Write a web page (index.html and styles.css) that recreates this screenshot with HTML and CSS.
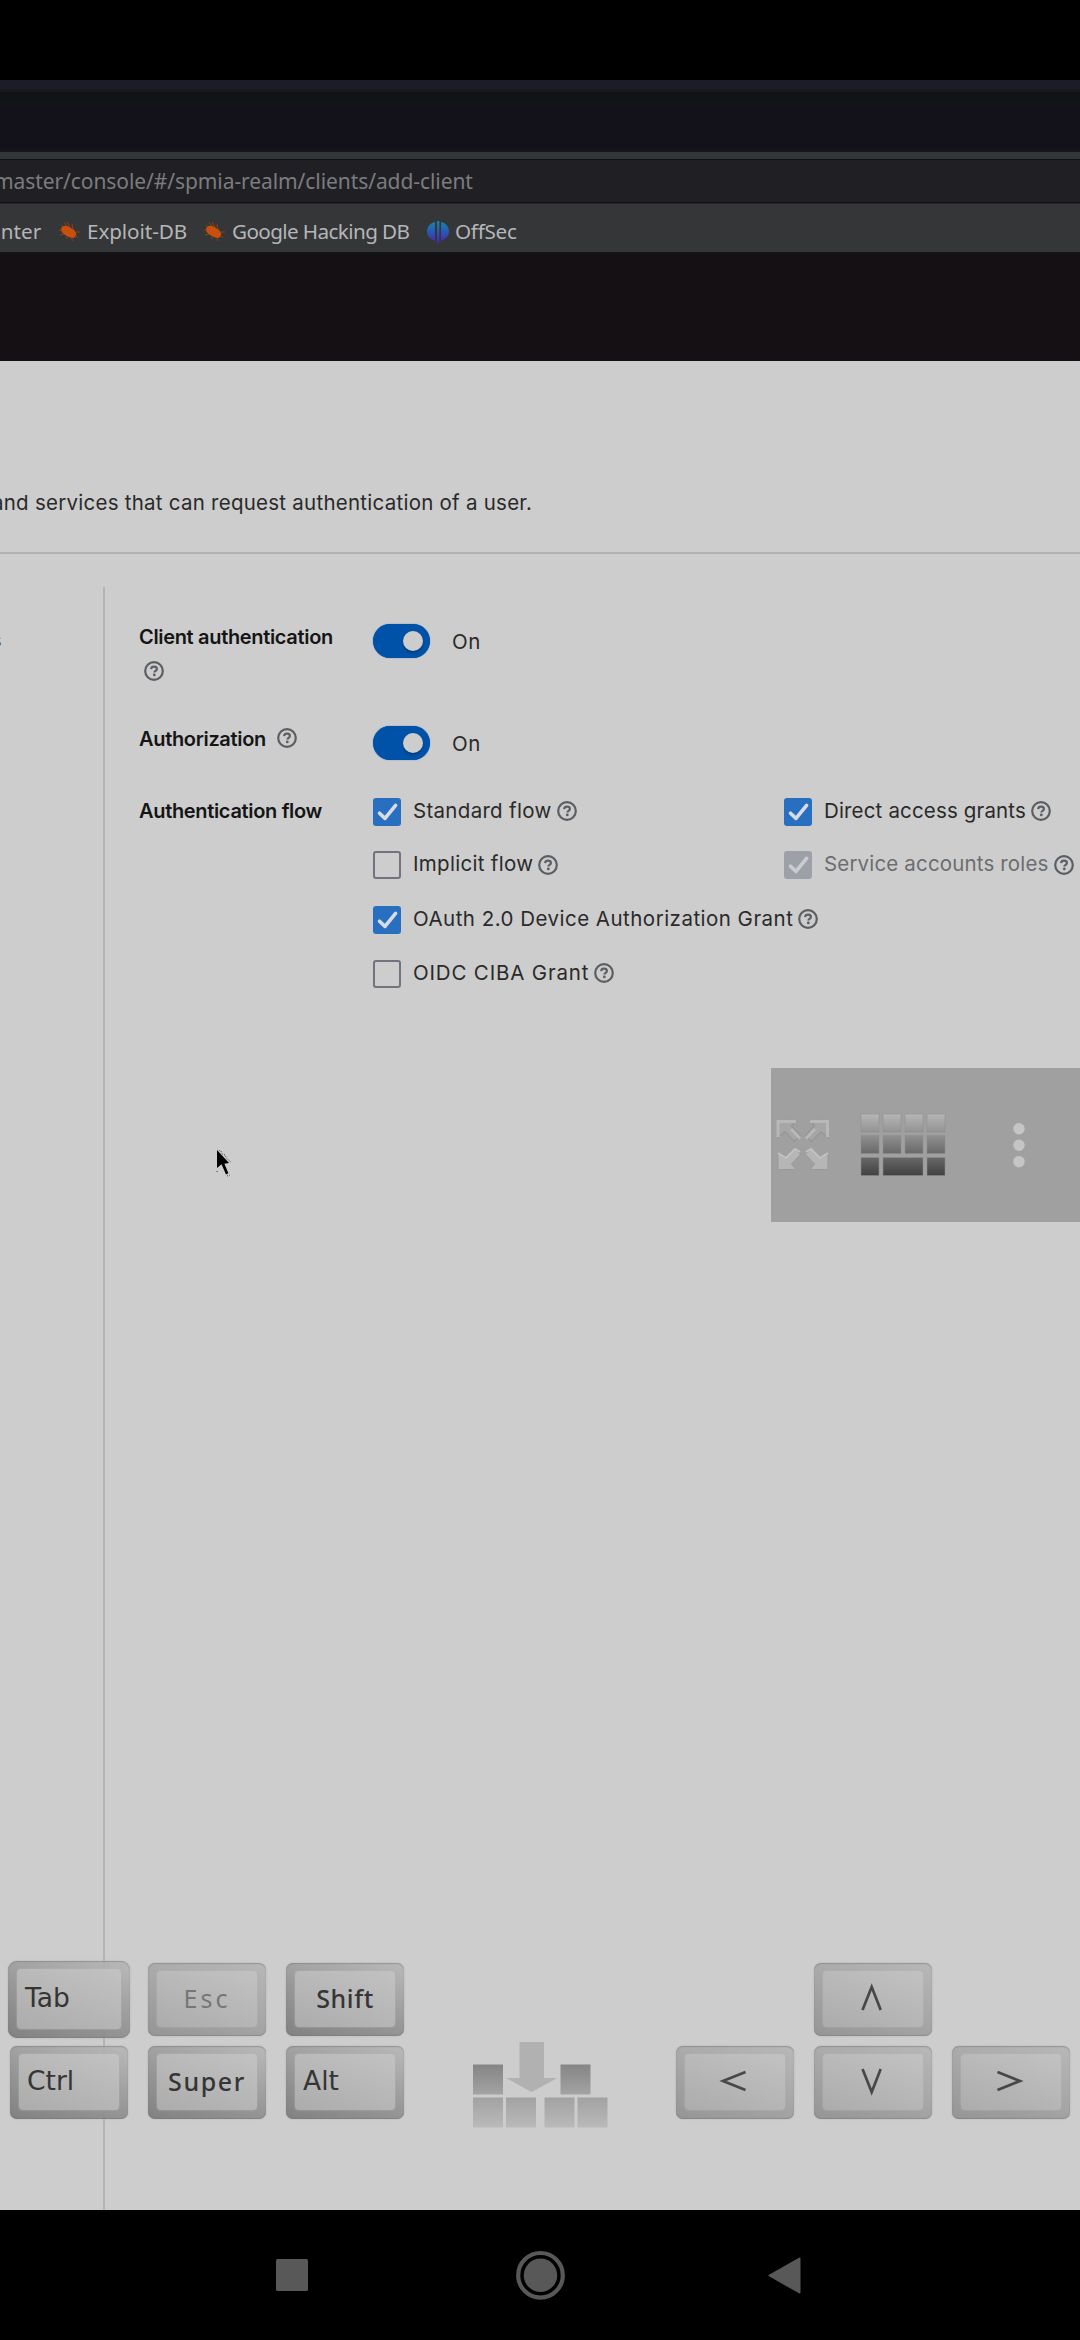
FILE: index.html
```html
<!DOCTYPE html>
<html lang="en">
<head>
<meta charset="utf-8">
<title>Add client</title>
<link rel="stylesheet" href="styles.css">
</head>
<body>
<svg width="0" height="0" class="defs">
  <defs>
    <symbol id="help" viewBox="0 0 20 20">
      <circle cx="10" cy="10" r="8.800" fill="none" stroke="#5b5e63" stroke-width="2.200"/>
      <path d="M7.100 8.100C7.300 6.500 8.500 5.700 10 5.700c1.700 0 2.900 .9 2.900 2.300 0 1.900-2.500 1.900-2.500 3.600" fill="none" stroke="#5b5e63" stroke-width="2.200"/>
      <circle cx="10.300" cy="13.900" r="1.400" fill="#5b5e63"/>
    </symbol>
    <symbol id="check" viewBox="0 0 28 28">
      <path d="M6.500 15.200 12 20.400 22.600 7.400" fill="none" stroke="#d8dce2" stroke-width="3.600" stroke-linecap="round" stroke-linejoin="round"/>
    </symbol>
    <symbol id="bug" viewBox="0 0 22 20">
      <path d="M2 7c1-4 6-4 10-1 4 2 6 5 5 8-2 3-6 2-9 0-4-2-6-4-6-7z" fill="#c9500c"/>
      <path d="M4 5 2 3M8 4 5 1M11 5 8 0M14 7l-1-5M17 10l4 0M16 13l3 3M12 15l2 4M8 14l0 3M5 12l-4 1M3 9 0 8" stroke="#8c4013" stroke-width="1" fill="none"/>
    </symbol>
    <linearGradient id="blues" x1="0" y1="0" x2="0" y2="1"><stop offset="0" stop-color="#1687a8"/><stop offset=".5" stop-color="#2a57b4"/><stop offset="1" stop-color="#4a24ae"/></linearGradient>
    <linearGradient id="g1" x1="0" y1="0" x2="0" y2="1"><stop offset="0" stop-color="#b6b6b6"/><stop offset="1" stop-color="#939393"/></linearGradient>
    <linearGradient id="g2" x1="0" y1="0" x2="0" y2="1"><stop offset="0" stop-color="#909090"/><stop offset="1" stop-color="#696969"/></linearGradient>
    <linearGradient id="g3" x1="0" y1="0" x2="0" y2="1"><stop offset="0" stop-color="#686868"/><stop offset="1" stop-color="#414141"/></linearGradient>
    <linearGradient id="g4" x1="0" y1="0" x2="0" y2="1"><stop offset="0" stop-color="#858585"/><stop offset="1" stop-color="#a3a3a3"/></linearGradient>
    <linearGradient id="g5" x1="0" y1="0" x2="0" y2="1"><stop offset="0" stop-color="#a2a2a2"/><stop offset="1" stop-color="#bababa"/></linearGradient>
  </defs>
</svg>

<div class="status"></div>
<div class="desktop-edge"></div>
<div class="tabstrip"></div>
<div class="urlbar"><span class="url">master/console/#/spmia-realm/clients/add-client</span></div>
<nav class="bookmarks">
  <span class="bm bm-hunter">unter</span>
  <svg class="bugicon"><use href="#bug"/></svg><span class="bm bm-exploit">Exploit-DB</span>
  <svg class="bugicon"><use href="#bug"/></svg><span class="bm bm-google">Google Hacking DB</span>
  <svg class="offsec" viewBox="0 0 22 22"><path d="M8 1v19C3 18 0 15 0 10.500 0 6 3 2 8 1zM14 1c5 1 8 5 8 9.500 0 4.500-3 7.500-8 9.500zM10 0h2.400v22H10z" fill="url(#blues)"/></svg><span class="bm bm-off">OffSec</span>
</nav>
<header class="masthead"></header>

<main class="page">
  <p class="intro">and services that can request authentication of a user.</p>
  <div class="columns">
    <aside class="steps"><span>s</span></aside>
    <form class="settings">
      <div class="row client">
        <div class="label"><span>Client authentication</span><svg class="help"><use href="#help"/></svg></div>
        <div class="control"><span class="toggle"><i></i></span><span class="on">On</span></div>
      </div>
      <div class="row authz">
        <div class="label"><span>Authorization</span><svg class="help"><use href="#help"/></svg></div>
        <div class="control"><span class="toggle"><i></i></span><span class="on">On</span></div>
      </div>
      <div class="row flows">
        <div class="label"><span>Authentication flow</span></div>
        <div class="grid">
          <div class="option"><span class="box checked"><svg><use href="#check"/></svg></span><span class="text t-std">Standard flow</span><svg class="help"><use href="#help"/></svg></div>
          <div class="option"><span class="box checked"><svg><use href="#check"/></svg></span><span class="text t-dir">Direct access grants</span><svg class="help"><use href="#help"/></svg></div>
          <div class="option low"><span class="box"></span><span class="text t-std">Implicit flow</span><svg class="help"><use href="#help"/></svg></div>
          <div class="option low"><span class="box checked disabled"><svg><use href="#check"/></svg></span><span class="text t-dir muted">Service accounts roles</span><svg class="help"><use href="#help"/></svg></div>
          <div class="option wide"><span class="box checked"><svg><use href="#check"/></svg></span><span class="text t-oauth">OAuth 2.0 Device Authorization Grant</span><svg class="help"><use href="#help"/></svg></div>
          <div class="option wide"><span class="box"></span><span class="text t-oidc">OIDC CIBA Grant</span><svg class="help"><use href="#help"/></svg></div>
        </div>
      </div>
    </form>
  </div>
</main>

<footer class="android">
  <svg viewBox="0 0 1080 130">
    <rect x="276" y="49" width="32" height="32" rx="1.500" fill="#585858"/>
    <circle cx="540.500" cy="65.300" r="22.300" fill="none" stroke="#585858" stroke-width="4.200"/>
    <circle cx="540.500" cy="65.300" r="16.700" fill="#585858"/>
    <path d="M769.500 65.500 799.500 48.500v34z" fill="#585858" stroke="#585858" stroke-width="2" stroke-linejoin="round"/>
  </svg>
</footer>

<svg class="cursor" viewBox="0 0 18 28"><path d="M1 0v18l4.500-3.800 4.500 10.300 2.400-1.300-4-9.500 4.600-.8z" fill="#000"/><path d="M3 0l2 1 1 3 3 1 2 4 4 3M1 21v2M11 26l3-1" fill="none" stroke="#333" stroke-width="1" stroke-dasharray="1 1.500"/></svg>

<div class="toolbar">
  <svg viewBox="0 0 309 154">
    <defs>
      <path id="arr" d="M0 0h18l-4.500 5.500 9 9.500-6 6-9.500-9.500L0 17z"/>
      <filter id="soft" x="-10%" y="-10%" width="120%" height="120%"><feGaussianBlur stdDeviation=".7"/></filter>
    </defs>
    <g filter="url(#soft)">
      <g fill="#a6a6a6" stroke="#979797" stroke-width="1.500">
        <use href="#arr" transform="translate(7 52.500)"/><use href="#arr" transform="matrix(-1 0 0 1 57 52.500)"/>
      </g>
      <path d="M7 69V53.500H25M39 53.500H56.500V69M20 61l9 9.500M44 61l-9 9.500" fill="none" stroke="#b8b8b8" stroke-width="3"/>
      <g fill="#b6b6b6" stroke="#999" stroke-width="1">
        <use href="#arr" transform="matrix(1 0 0 -1 7 101.500)"/><use href="#arr" transform="matrix(-1 0 0 -1 57 101.500)"/>
      </g>
      <path d="M7 85l8 5 9-9 5 3M57 85l-8 5-9-9-5 3" fill="none" stroke="#c2c2c2" stroke-width="2"/>
    </g>
    <g stroke="#8c8c8c" stroke-opacity=".5" stroke-width="1">
      <g fill="url(#g1)"><rect x="90" y="46" width="18" height="18"/><rect x="112" y="46" width="18" height="18"/><rect x="134" y="46" width="18" height="18"/><rect x="156" y="46" width="18" height="18"/></g>
      <g fill="url(#g2)"><rect x="90" y="67.500" width="18" height="18"/><rect x="112" y="67.500" width="18" height="18"/><rect x="134" y="67.500" width="18" height="18"/><rect x="156" y="67.500" width="18" height="18"/></g>
      <g fill="url(#g3)"><rect x="90" y="89.500" width="18" height="18"/><rect x="112" y="89.500" width="40" height="18"/><rect x="156" y="89.500" width="18" height="18"/></g>
    </g>
    <g fill="#c5c5c5"><circle cx="248" cy="60.700" r="5.700"/><circle cx="248" cy="77.200" r="5.700"/><circle cx="248" cy="93.600" r="5.700"/></g>
  </svg>
</div>

<div class="keys">
  <div class="pad modifiers">
    <div class="key big left dark"><span>Tab</span></div><div class="key faint"><span class="k-esc">Esc</span></div><div class="key dark"><span class="k-shift">Shift</span></div>
    <div class="key left dark"><span>Ctrl</span></div><div class="key dark"><span class="k-super">Super</span></div><div class="key left dark"><span>Alt</span></div>
  </div>
  <svg class="drop" viewBox="0 0 136 86">
    <g fill="url(#g4)"><rect x="0" y="22.500" width="30" height="30"/><rect x="87.500" y="22.500" width="30" height="30"/></g>
    <g fill="url(#g5)"><rect x="0" y="55.500" width="30" height="30"/><rect x="33" y="55.500" width="30" height="30"/><rect x="71.500" y="55.500" width="30" height="30"/><rect x="104.500" y="55.500" width="30" height="30"/></g>
    <path d="M46.500 0H71v36h13.500L58.500 50 33 36h13.500z" fill="#b1b1b1"/>
  </svg>
  <div class="pad arrows">
    <div class="key up"><svg viewBox="0 0 118 73"><path d="M48.500 47 57.700 24l9 23"/></svg></div>
    <div class="key"><svg viewBox="0 0 118 73"><path d="M69.500 26 47 35l22.500 9"/></svg></div>
    <div class="key"><svg viewBox="0 0 118 73"><path d="M48.500 23 57.700 46l9-23"/></svg></div>
    <div class="key"><svg viewBox="0 0 118 73"><path d="M45.500 26l22.500 9-22.500 9"/></svg></div>
  </div>
</div>
</body>
</html>
```
FILE: styles.css
```css
* { box-sizing: border-box; }
body {
  margin: 0;
  width: 1080px;
  height: 2340px;
  display: flex;
  flex-direction: column;
  position: relative;
  overflow: hidden;
  background: #cdcdcd;
  color: #2a2a2a;
  font-family: Inter, sans-serif;
  font-size: 20.5px;
}
svg { display: block; }
.defs { position: absolute; }
.status { height: 80px; background: #000; }
.desktop-edge { height: 12px; background: linear-gradient(#1b1c28 0 9px, #18191c 9px); }
.tabstrip { height: 60px; background: linear-gradient(#101314 0, #101314 6px, #141417 10px, #13121b 18px, #13121b 56px, #151619 60px); }
.urlbar {
  height: 52px;
  border-top: 7px solid #343538;
  background: linear-gradient(#101114 0 1px, #202024 1px 43px, #111114 43px 44px, #252629 44px);
  color: #7b7c7e;
  font: 21px/45px "Noto Sans", sans-serif;
  letter-spacing: -.08px;
  white-space: nowrap;
}
.url { display: block; margin-left: -6px; }
.bookmarks {
  height: 50px;
  display: flex;
  align-items: center;
  background: linear-gradient(#343638 0 48px, #111315 48px);
  color: #b5b6b7;
  font: 20.7px/48px "Noto Sans", sans-serif;
  white-space: nowrap;
}
.bm { flex: none; margin-top: 3px; }
.bugicon { width: 22px; height: 20px; flex: none; margin-top: 6px; }
.bm-hunter { width: 71px; margin-left: -12px; }
.bm-exploit { width: 123px; padding-left: 6px; letter-spacing: -.1px; }
.bm-google { width: 201px; padding-left: 6px; letter-spacing: -.62px; }
.offsec { width: 22px; height: 22px; flex: none; margin-top: 6px; }
.bm-off { padding-left: 6px; letter-spacing: -.3px; }
.masthead { height: 107px; background: #151013; }
.page { flex: 1; display: flex; flex-direction: column; }
.intro {
  margin: 0;
  height: 193px;
  padding: 128px 0 0 0;
  border-bottom: 2px solid #b2b2b2;
  line-height: 28px;
  letter-spacing: .25px;
  white-space: nowrap;
  text-indent: -8px;
}
.columns { flex: 1; display: flex; padding-top: 33px; }
.steps { width: 105px; border-right: 2px solid #b4b4b4; padding-top: 41px; overflow: hidden; font-size: 20px; }
.steps span { display: block; margin-left: -9px; }
.settings { flex: 1; padding: 37px 0 0 34px; }
.row { display: flex; }
.client { height: 102px; }
.authz { height: 72px; }
.label { width: 234px; font-size: 20px; font-weight: 600; letter-spacing: -.33px; color: #151515; line-height: 27px; white-space: nowrap; }
.help { width: 20px; height: 20px; flex: none; }
.client .help { margin: 10px 0 0 5px; }
.authz .label { display: flex; }
.authz .help { margin: 2px 0 0 11px; }
.control { display: flex; height: 34px; align-items: center; }
.toggle { width: 57px; height: 34px; border-radius: 17px; background: #0052a8; padding: 7px; display: flex; justify-content: flex-end; box-shadow: 0 0 1px #0052a8; }
.toggle i { width: 20px; height: 20px; border-radius: 50%; background: #cdcdcd; box-shadow: 0 2px 3px rgba(0,0,0,.25); }
.on { margin-left: 22px; padding-top: 1px; letter-spacing: .5px; }
.grid { display: grid; grid-template-columns: 411px 1fr; grid-template-rows: 53px 55px 54px 30px; }
.flows { white-space: nowrap; }
.option { display: flex; align-items: flex-start; }
.wide { grid-column: 1 / 3; }
.box { width: 28px; height: 28px; border: 2.5px solid #73727e; border-radius: 3px; flex: none; background: #cdcdcd; }
.checked { border: 0; background: #286fc0; }
.disabled { background: #9da1a7; }
.box svg { width: 28px; height: 28px; }
.disabled svg { opacity: .75; }
.text { line-height: 27px; margin: -1px 5px 0 12px; }
.t-std { letter-spacing: .3px; }
.t-dir { letter-spacing: .16px; }
.t-oauth { letter-spacing: .48px; }
.t-oidc { letter-spacing: .83px; }
.option .help { margin-top: 3px; }
.option.low .help { margin-top: 4px; }
.muted { color: #6b6d70; }
.android { height: 130px; background: #000; }
.android svg { width: 1080px; height: 130px; }
.cursor { position: absolute; left: 216px; top: 1150px; width: 18px; height: 28px; }
.toolbar { position: absolute; left: 771px; top: 1068px; width: 309px; height: 154px; background: #a0a0a0; }
.keys { position: absolute; left: 0; top: 1961px; width: 1080px; height: 160px; display: flex; align-items: flex-start; }
.pad { display: grid; grid-template-columns: repeat(3, 118px); grid-template-rows: 73px 73px; gap: 10px 20px; padding-top: 2px; }
.modifiers { margin-left: 10px; width: 394px; }
.drop { width: 136px; height: 86px; margin: 81px 0 0 69px; }
.arrows { margin-left: 67px; }
.key {
  position: relative;
  display: flex;
  align-items: center;
  justify-content: center;
  border-radius: 7px;
  background: linear-gradient(20deg, rgba(135,135,135,.95), rgba(158,158,158,.9) 45%, rgba(180,180,180,.9));
  box-shadow: inset 0 1px 1px rgba(115,118,120,.5), inset 0 -1px 1px rgba(115,118,120,.45), 0 0 2px #b0b0b0;
  color: #353535;
  font: 500 25px/30px "Noto Sans", sans-serif;
}
.key::before { content: ""; position: absolute; inset: 8px 9px 9px 9px; border-radius: 4px; background: linear-gradient(20deg, #acacac, #c2c2c2); box-shadow: 0 0 2px #b5b5b5; }
.key > * { position: relative; }
.key > span { margin-bottom: 4px; }
.big { width: 122px; height: 77px; margin: -2px 0 0 -2px; border-radius: 9px; }
.dark { background: linear-gradient(20deg, rgba(125,125,127,.95), rgba(146,146,146,.9) 45%, rgba(182,182,182,.85)); }
.left { justify-content: flex-start; padding-left: 17px; font: 26.5px/30px "DejaVu Sans", sans-serif; }
.k-esc { letter-spacing: 3px; }
.k-shift { letter-spacing: .6px; }
.k-super { letter-spacing: 1.6px; }
.faint { color: #777; font-weight: 400; }
.faint, .arrows .key { background: linear-gradient(20deg, #959595, #a5a5a5 45%, #b8b8b8); }
.key svg { width: 118px; height: 73px; }
.key path { fill: none; stroke: #484848; stroke-width: 2.7; }
.up { grid-column: 2; }
.up + .key { grid-column: 1; }
```
